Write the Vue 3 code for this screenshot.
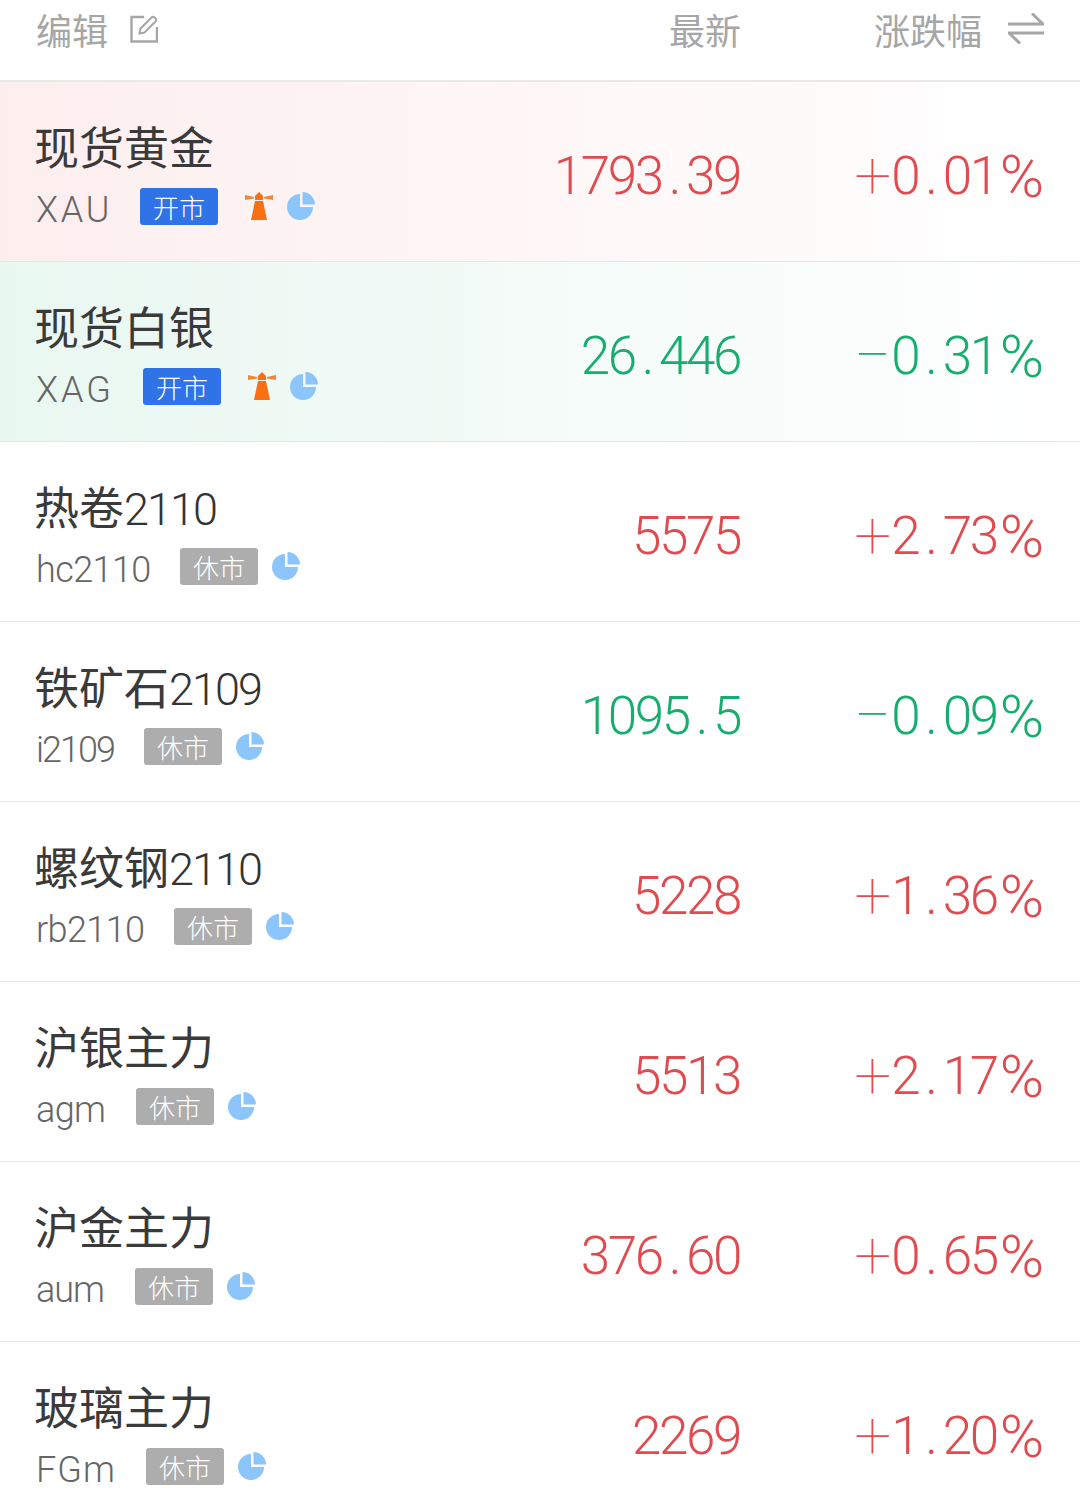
<script setup>
const rows = [
  { name: "现货黄金", code: "XAU", codeWidth: 74, track: 2.7, open: true, beacon: true, price: "1793.39", change: "+0.01%", tint: "tint-up" },
  { name: "现货白银", code: "XAG", codeWidth: 77, track: 3, open: true, beacon: true, price: "26.446", change: "−0.31%", tint: "tint-down" },
  { name: "热卷2110", code: "hc2110", codeWidth: 114, track: -0.6, price: "5575", change: "+2.73%" },
  { name: "铁矿石2109", code: "i2109", codeWidth: 78, track: -2, price: "1095.5", change: "−0.09%" },
  { name: "螺纹钢2110", code: "rb2110", codeWidth: 108, track: -0.6, price: "5228", change: "+1.36%" },
  { name: "沪银主力", code: "agm", codeWidth: 70, track: -0.6, price: "5513", change: "+2.17%" },
  { name: "沪金主力", code: "aum", codeWidth: 69, track: -1, price: "376.60", change: "+0.65%" },
  { name: "玻璃主力", code: "FGm", codeWidth: 80, track: 1, price: "2269", change: "+1.20%" },
];

function isUp(row) {
  return row.change.startsWith("+");
}

// 中文和数字分开，数字的字距要单独收紧
function nameParts(name) {
  return name.split(/(\d+)/).filter(Boolean);
}

// 符号、小数点、百分号的宽度和数字不一样，拆开分别设置
function valueParts(value) {
  return value.split(/([+−.%])/).filter(Boolean);
}

function partClass(part) {
  if (part === "+" || part === "−") return "sign";
  if (part === ".") return "dot";
  if (part === "%") return "pct";
  return "";
}
</script>

<template>
  <div class="page">
    <header class="head">
      <div class="head-name">
        <span>编辑</span>
        <svg class="edit-icon" width="28" height="28" viewBox="0 0 28 28" fill="none" stroke="#a6a6a6" stroke-width="2.4">
          <path d="M14 2H1.5v24.500H27V12" />
          <path d="M9.500 18.500l1-5L21.500 2.500a2 2 0 0 1 3 0l1 1a2 2 0 0 1 0 3L14.500 17.500z" stroke-width="2" />
        </svg>
      </div>
      <div class="head-price">最新</div>
      <div class="head-change">
        <span>涨跌幅</span>
        <svg width="36" height="32" viewBox="0 0 36 32" fill="none" stroke="#a6a6a6" stroke-width="3">
          <path d="M0 11h35L24 0.500" />
          <path d="M36 20H1l11 10.500" />
        </svg>
      </div>
    </header>

    <div v-for="row in rows" :key="row.code" class="row" :class="row.tint">
      <div class="info">
        <div class="name">
          <span v-for="part in nameParts(row.name)" :key="part" :class="{ 'name-num': /\d/.test(part) }">{{ part }}</span>
        </div>
        <div class="meta">
          <span class="code" :style="{ width: row.codeWidth + 'px', letterSpacing: row.track + 'px' }">{{ row.code }}</span>
          <span class="tag" :class="{ 'tag-open': row.open }">{{ row.open ? "开市" : "休市" }}</span>
          <svg v-if="row.beacon" class="beacon" width="28" height="28" viewBox="0 0 28 28" fill="#f96f12">
            <path d="M14 0l4 4v4H10V4z" />
            <path d="M10 9h8l4 19H6z" />
            <path d="M0 3l9 2v1.500L0 8zM28 3l-9 2v1.500L28 8z" fill="#f0873a" />
          </svg>
          <svg class="pie" width="28" height="28" viewBox="0 0 28 28" fill="#8cc4fc">
            <path d="M13 2a13 13 0 1 0 13 13H13z" />
            <path d="M15.500 0A12.500 12.500 0 0 1 28 12.500H15.500z" />
          </svg>
        </div>
      </div>
      <div class="price" :class="isUp(row) ? 'up' : 'down'">
        <span v-for="(part, i) in valueParts(row.price)" :key="i" :class="partClass(part)">{{ part }}</span>
      </div>
      <div class="change" :class="isUp(row) ? 'up' : 'down'">
        <span v-for="(part, i) in valueParts(row.change)" :key="i" :class="partClass(part)">{{ part }}</span>
      </div>
    </div>
  </div>
</template>

<style>
html,
body {
  background: #fff;
}
</style>

<style scoped>
.page {
  width: 1080px;
  height: 1499px;
  overflow: hidden;
  font-family: Roboto, "Noto Sans CJK SC", sans-serif;
  font-weight: 400;
}

.head {
  display: flex;
  align-items: flex-start;
  height: 80px;
  padding: 0 36px;
  border-bottom: 2px solid #e9e9e9;
  font-size: 36px;
  line-height: 66px;
  color: #a6a6a6;
}

.head-name {
  display: flex;
  flex: 1;
  gap: 22px;
}

.edit-icon {
  margin-top: 15px;
}

.head-price {
  width: 72px;
  text-align: right;
}

.head-change {
  display: flex;
  justify-content: flex-end;
  width: 303px;
  gap: 26px;
}

.head-change svg {
  margin-top: 13px;
}

.row {
  display: flex;
  align-items: flex-start;
  box-sizing: border-box;
  height: 180px;
  padding: 0 36px;
  border-bottom: 1px solid #e6e6e6;
}

.tint-up {
  background: linear-gradient(90deg, #fdeeee, #fff);
}

.tint-down {
  background: linear-gradient(90deg, #e9f7f1, #fff);
}

.info {
  flex: 1;
  margin-top: 40px;
}

.name {
  margin-left: -2px;
  font-size: 45px;
  line-height: 56px;
  color: #3a3a3a;
}

.name-num {
  font-weight: 300;
  letter-spacing: -2px;
  color: #333;
}

.meta {
  display: flex;
  align-items: center;
  height: 40px;
  margin-top: 8px;
}

.code {
  box-sizing: border-box;
  flex: none;
  margin-right: 30px;
  padding-top: 8px;
  font-size: 36px;
  font-weight: 300;
  white-space: nowrap;
  color: #666;
}

.tag {
  width: 78px;
  height: 37px;
  border-radius: 3px;
  background: #adadad;
  font-size: 26px;
  font-weight: 300;
  line-height: 42px;
  text-align: center;
  color: #fff;
}

.tag-open {
  background: #2f73e6;
}

.beacon {
  margin-left: 27px;
}

.pie {
  margin-left: 14px;
}

.price,
.change {
  box-sizing: border-box;
  padding-top: 62px;
  font-size: 53px;
  font-weight: 300;
  line-height: 64px;
  letter-spacing: -2.4px;
  text-align: right;
}

.price {
  width: 240px;
  padding-right: 2px;
}

.change {
  width: 302px;
}

.sign {
  font-size: 66px;
  font-weight: 100;
  line-height: 0;
  letter-spacing: 0;
  vertical-align: -4px;
}

.dot {
  margin: 0 7px;
}

.pct {
  margin-left: 3px;
  font-size: 60px;
  line-height: 0;
  letter-spacing: 0;
  vertical-align: -3px;
}

.up {
  color: #e04b4f;
}

.down {
  color: #17ad6e;
}
</style>
